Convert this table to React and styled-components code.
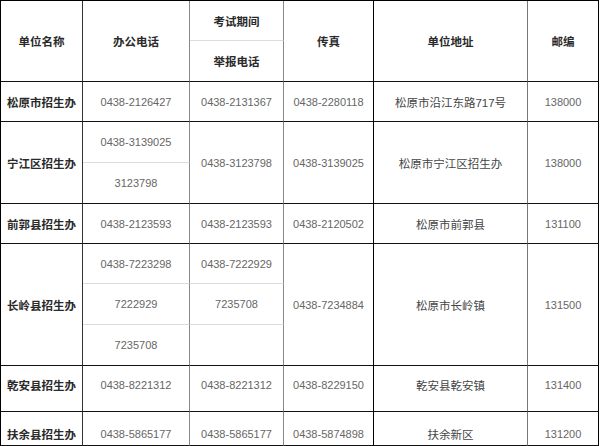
import React from 'react'
import styled, { createGlobalStyle } from 'styled-components'

const GlobalStyle = createGlobalStyle`
  html, body {
    margin: 0;
    padding: 0;
    background: #fff;
  }
  * {
    box-sizing: border-box;
  }
`

const Table = styled.div`
  display: grid;
  grid-template-columns: 82px 107px 94px 90px 154px 71px;
  grid-template-rows: 40px 41px 40px 41px 41px 40px 40px 41px 41px 46px 34px;
  width: 599px;
  border-top: 1px solid #000;
  border-left: 1px solid #000;
  font-family: "Liberation Sans", "Noto Sans CJK SC", sans-serif;
`

// right border colour per column
const colLines = ['#333', '#888', '#888', '#000', '#777', '#000']

const Cell = styled.div`
  grid-row: span ${p => p.span || 1};
  display: flex;
  align-items: center;
  justify-content: center;
  white-space: nowrap;
  border-right: 1px solid ${p => colLines[p.col]};
  border-bottom: 1px solid ${p => (p.sub ? '#dcdcdc' : '#111')};
  padding-top: ${p => p.pt || 0}px;
  padding-bottom: ${p => p.pb || 0}px;
  font-size: ${p => (p.num ? '11px' : '11.5px')};
  font-weight: ${p => (p.bold ? 700 : 400)};
  color: ${p => (p.bold ? '#2a2a2a' : p.num ? '#666' : '#444')};
`

const isNum = s => /^[0-9-]+$/.test(s)

// [text, col, span, sub]
const cells = [
  ['单位名称', 0, 2, false, true],
  ['办公电话', 1, 2, false, true],
  ['考试期间', 2, 1, true, true],
  ['传真', 3, 2, false, true],
  ['单位地址', 4, 2, false, true],
  ['邮编', 5, 2, false, true],
  ['举报电话', 2, 1, false, true],

  ['松原市招生办', 0, 1, false, true],
  ['0438-2126427', 1],
  ['0438-2131367', 2],
  ['0438-2280118', 3],
  ['松原市沿江东路717号', 4],
  ['138000', 5],

  ['宁江区招生办', 0, 2, false, true],
  ['0438-3139025', 1, 1, true],
  ['0438-3123798', 2, 2],
  ['0438-3139025', 3, 2],
  ['松原市宁江区招生办', 4, 2],
  ['138000', 5, 2],
  ['3123798', 1],

  ['前郭县招生办', 0, 1, false, true],
  ['0438-2123593', 1],
  ['0438-2123593', 2],
  ['0438-2120502', 3],
  ['松原市前郭县', 4],
  ['131100', 5],

  ['长岭县招生办', 0, 3, false, true],
  ['0438-7223298', 1, 1, true],
  ['0438-7222929', 2, 1, true],
  ['0438-7234884', 3, 3],
  ['松原市长岭镇', 4, 3],
  ['131500', 5, 3],
  ['7222929', 1, 1, true],
  ['7235708', 2, 1, true],
  ['7235708', 1],
  ['', 2],
]

const lastRows = [
  ['乾安县招生办', '0438-8221312', '0438-8221312', '0438-8229150', '乾安县乾安镇', '131400'],
  ['扶余县招生办', '0438-5865177', '0438-5865177', '0438-5874898', '扶余新区', '131200'],
]
const lastPad = [{ pb: 7 }, { pt: 10 }]

export default function App() {
  return (
    <>
      <GlobalStyle />
      <Table>
        {cells.map(([text, col, span, sub, bold], i) => (
          <Cell key={i} col={col} span={span} sub={sub} bold={bold} num={isNum(text)}>
            {text}
          </Cell>
        ))}
        {lastRows.map((row, r) =>
          row.map((text, col) => (
            <Cell
              key={`l${r}-${col}`}
              col={col}
              bold={col === 0}
              num={isNum(text)}
              pt={lastPad[r].pt}
              pb={lastPad[r].pb}
            >
              {text}
            </Cell>
          ))
        )}
      </Table>
    </>
  )
}
